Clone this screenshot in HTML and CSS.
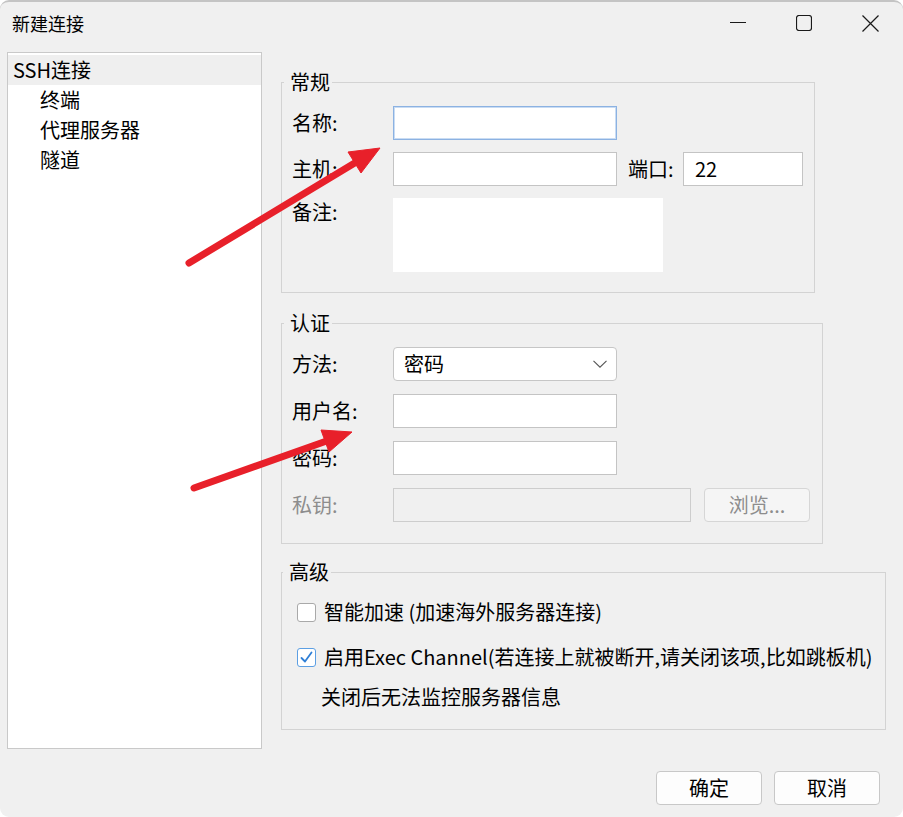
FILE: index.html
```html
<!DOCTYPE html>
<html lang="zh-CN">
<head>
<meta charset="utf-8">
<title>新建连接</title>
<link rel="stylesheet" href="styles.css">
</head>
<body>
<div class="window">
  <header class="titlebar">
    <span class="title">新建连接</span>
    <div class="controls">
      <span class="ctl"><svg width="16" height="16" viewBox="0 0 16 16"><path d="M0 7.5h16" stroke="#1a1a1a" stroke-width="1"/></svg></span>
      <span class="ctl"><svg width="16" height="16" viewBox="0 0 16 16"><rect x="0.5" y="0.5" width="15" height="15" rx="2.5" fill="none" stroke="#1a1a1a" stroke-width="1.2"/></svg></span>
      <span class="ctl"><svg width="17" height="17" viewBox="0 0 17 17"><path d="M0.5 0.5L16.5 16.5M16.5 0.5L0.5 16.5" stroke="#1a1a1a" stroke-width="1.2"/></svg></span>
    </div>
  </header>

  <div class="main">
    <nav class="tree">
      <div class="node selected">SSH连接</div>
      <div class="node child">终端</div>
      <div class="node child">代理服务器</div>
      <div class="node child">隧道</div>
    </nav>

    <div class="content">
      <fieldset class="group g-general">
        <legend>常规</legend>
        <div class="row">
          <span class="lbl">名称:</span>
          <span class="input focus w-main"></span>
        </div>
        <div class="row">
          <span class="lbl">主机:</span>
          <span class="input w-main"></span>
          <span class="lbl port-lbl">端口:</span>
          <span class="input w-port"><span class="val">22</span></span>
        </div>
        <div class="row top">
          <span class="lbl lbl-top">备注:</span>
          <span class="textarea"></span>
        </div>
      </fieldset>

      <fieldset class="group g-auth">
        <legend>认证</legend>
        <div class="row">
          <span class="lbl">方法:</span>
          <span class="select w-main">
            <span class="val">密码</span>
            <svg class="chev" width="14" height="8" viewBox="0 0 14 8"><path d="M0.5 0.8L7 7.2L13.5 0.8" fill="none" stroke="#555" stroke-width="1.1"/></svg>
          </span>
        </div>
        <div class="row">
          <span class="lbl">用户名:</span>
          <span class="input w-main"></span>
        </div>
        <div class="row">
          <span class="lbl">密码:</span>
          <span class="input w-main"></span>
        </div>
        <div class="row">
          <span class="lbl disabled">私钥:</span>
          <span class="input disabled-input w-key"></span>
          <span class="btn small disabled">浏览...</span>
        </div>
      </fieldset>

      <fieldset class="group g-adv">
        <legend>高级</legend>
        <div class="check-row">
          <span class="box"></span>
          <span class="check-text">智能加速 (加速海外服务器连接)</span>
        </div>
        <div class="check-row second">
          <span class="box checked"><svg width="15" height="15" viewBox="0 0 15 15"><path d="M2.5 8L6 11.5L12.5 2.5" fill="none" stroke="#2f7fd6" stroke-width="1.8" stroke-linecap="round" stroke-linejoin="round"/></svg></span>
          <span class="check-text">启用Exec Channel(若连接上就被断开,请关闭该项,比如跳板机)</span>
        </div>
        <div class="note">关闭后无法监控服务器信息</div>
      </fieldset>
    </div>
  </div>

  <footer class="footer">
    <span class="btn">确定</span>
    <span class="btn">取消</span>
  </footer>
</div>

<svg class="arrows" width="903" height="817" viewBox="0 0 903 817">
  <g fill="#e8202a" stroke="#e8202a">
    <line x1="189" y1="263" x2="358" y2="161" stroke-width="7" stroke-linecap="round"/>
    <polygon points="380,148 348,152 361,173" stroke-width="1" stroke-linejoin="round"/>
    <line x1="194" y1="488" x2="328" y2="440.5" stroke-width="7" stroke-linecap="round"/>
    <polygon points="352,432 321,430 329,452" stroke-width="1" stroke-linejoin="round"/>
  </g>
</svg>
</body>
</html>
```

FILE: styles.css
```css
* { box-sizing: border-box; }

html, body {
  margin: 0;
  padding: 0;
  background: #ffffff;
}

body {
  position: relative;
  width: 903px;
  height: 817px;
  overflow: hidden;
  font-family: "Noto Sans CJK SC", "Microsoft YaHei", "Noto Sans", sans-serif;
  color: #000;
}

.window {
  width: 903px;
  height: 817px;
  background: #f0f0f0;
  border-top: 2px solid #c4c4c4;
  border-radius: 9px;
  display: flex;
  flex-direction: column;
}

/* title bar */
.titlebar {
  height: 42px;
  display: flex;
  align-items: center;
  justify-content: space-between;
  flex: none;
}

.title {
  padding-left: 12px;
  font-size: 18px;
  line-height: 24px;
}

.controls {
  display: flex;
  height: 100%;
}

.ctl {
  width: 66px;
  display: flex;
  align-items: center;
  justify-content: center;
}

.ctl svg { display: block; }

/* main */
.main {
  display: flex;
  padding: 8px 0 0 7px;
  flex: none;
}

.tree {
  width: 255px;
  height: 697px;
  background: #fff;
  border: 1px solid #c9c9c9;
  padding-top: 2px;
}

.node {
  height: 30px;
  line-height: 30px;
  font-size: 20px;
  padding-left: 5px;
}

.node.selected { background: #efefef; }
.node.child { padding-left: 32px; }

.content {
  margin-left: 19px;
  padding-top: 20px;
  display: flex;
  flex-direction: column;
}

/* group boxes */
.group {
  margin: 0;
  border: 1px solid #d3d3d3;
  min-width: 0;
  display: flex;
  flex-direction: column;
}

.group legend {
  font-size: 20px;
  line-height: 20px;
  padding: 0 2px 0 6px;
  margin-left: -8px;
}

.g-general {
  width: 534px;
  padding: 14px 10px 20px 10px;
  gap: 12px;
}

.g-auth {
  width: 542px;
  margin-top: 20px;
  padding: 14px 10px 21px 10px;
  gap: 13px;
}

.g-adv {
  width: 605px;
  margin-top: 18px;
  padding: 15px 10px 17px 15px;
}

.g-adv legend {
  margin-left: -14px;
}

.row {
  display: flex;
  align-items: center;
  height: 34px;
}

.row.top {
  align-items: flex-start;
  height: 74px;
}

.lbl {
  width: 101px;
  flex: none;
  font-size: 20px;
  line-height: 34px;
  white-space: nowrap;
}

.lbl-top { line-height: 28px; }

.lbl.disabled { color: #8d8d8d; }

.port-lbl {
  width: 55px;
  margin-left: 11px;
}

.input {
  height: 34px;
  background: #fff;
  border: 1px solid #c4c4c4;
  display: flex;
  align-items: center;
  flex: none;
}

.input.focus {
  border-color: #8cb2e2;
  box-shadow: inset 0 0 0 1px #c9dcf3;
}

.input .val {
  font-size: 20px;
  line-height: 30px;
  padding-left: 11px;
}

.w-main { width: 224px; }
.w-port { width: 120px; }
.w-key { width: 298px; }

.disabled-input {
  background: #f0f0f0;
  border-color: #cdcdcd;
}

.textarea {
  width: 270px;
  height: 74px;
  background: #fff;
  flex: none;
}

.select {
  height: 34px;
  background: #fff;
  border: 1px solid #c6c6c6;
  border-radius: 4px;
  display: flex;
  align-items: center;
  justify-content: space-between;
  padding: 0 9px 0 10px;
  flex: none;
}

.select .val {
  font-size: 20px;
  line-height: 30px;
}

.chev { display: block; }

/* buttons */
.btn {
  width: 106px;
  height: 34px;
  background: #fdfdfd;
  border: 1px solid #c8c8c8;
  border-radius: 4px;
  display: flex;
  align-items: center;
  justify-content: center;
  font-size: 20px;
  line-height: 30px;
}

.btn.small {
  margin-left: 13px;
}

.btn.disabled {
  background: #f5f5f5;
  border-color: #d6d6d6;
  color: #8d8d8d;
}

/* checkboxes */
.check-row {
  display: flex;
  align-items: center;
  height: 30px;
}

.check-row.second { margin-top: 15px; }

.box {
  width: 19px;
  height: 19px;
  border: 1px solid #a9a9a9;
  border-radius: 3px;
  background: #fff;
  flex: none;
  display: flex;
  align-items: center;
  justify-content: center;
}

.box.checked {
  border-color: #5c9fe3;
}

.box svg { display: block; }

.check-text {
  margin-left: 8px;
  font-size: 20px;
  line-height: 30px;
  white-space: nowrap;
}

.note {
  margin-top: 10px;
  margin-left: 24px;
  height: 30px;
  font-size: 20px;
  line-height: 30px;
}

/* footer */
.footer {
  display: flex;
  justify-content: flex-end;
  gap: 12px;
  padding: 22px 23px 0 0;
}

/* annotation arrows overlay */
.arrows {
  position: absolute;
  top: 0;
  left: 0;
  pointer-events: none;
}
```
